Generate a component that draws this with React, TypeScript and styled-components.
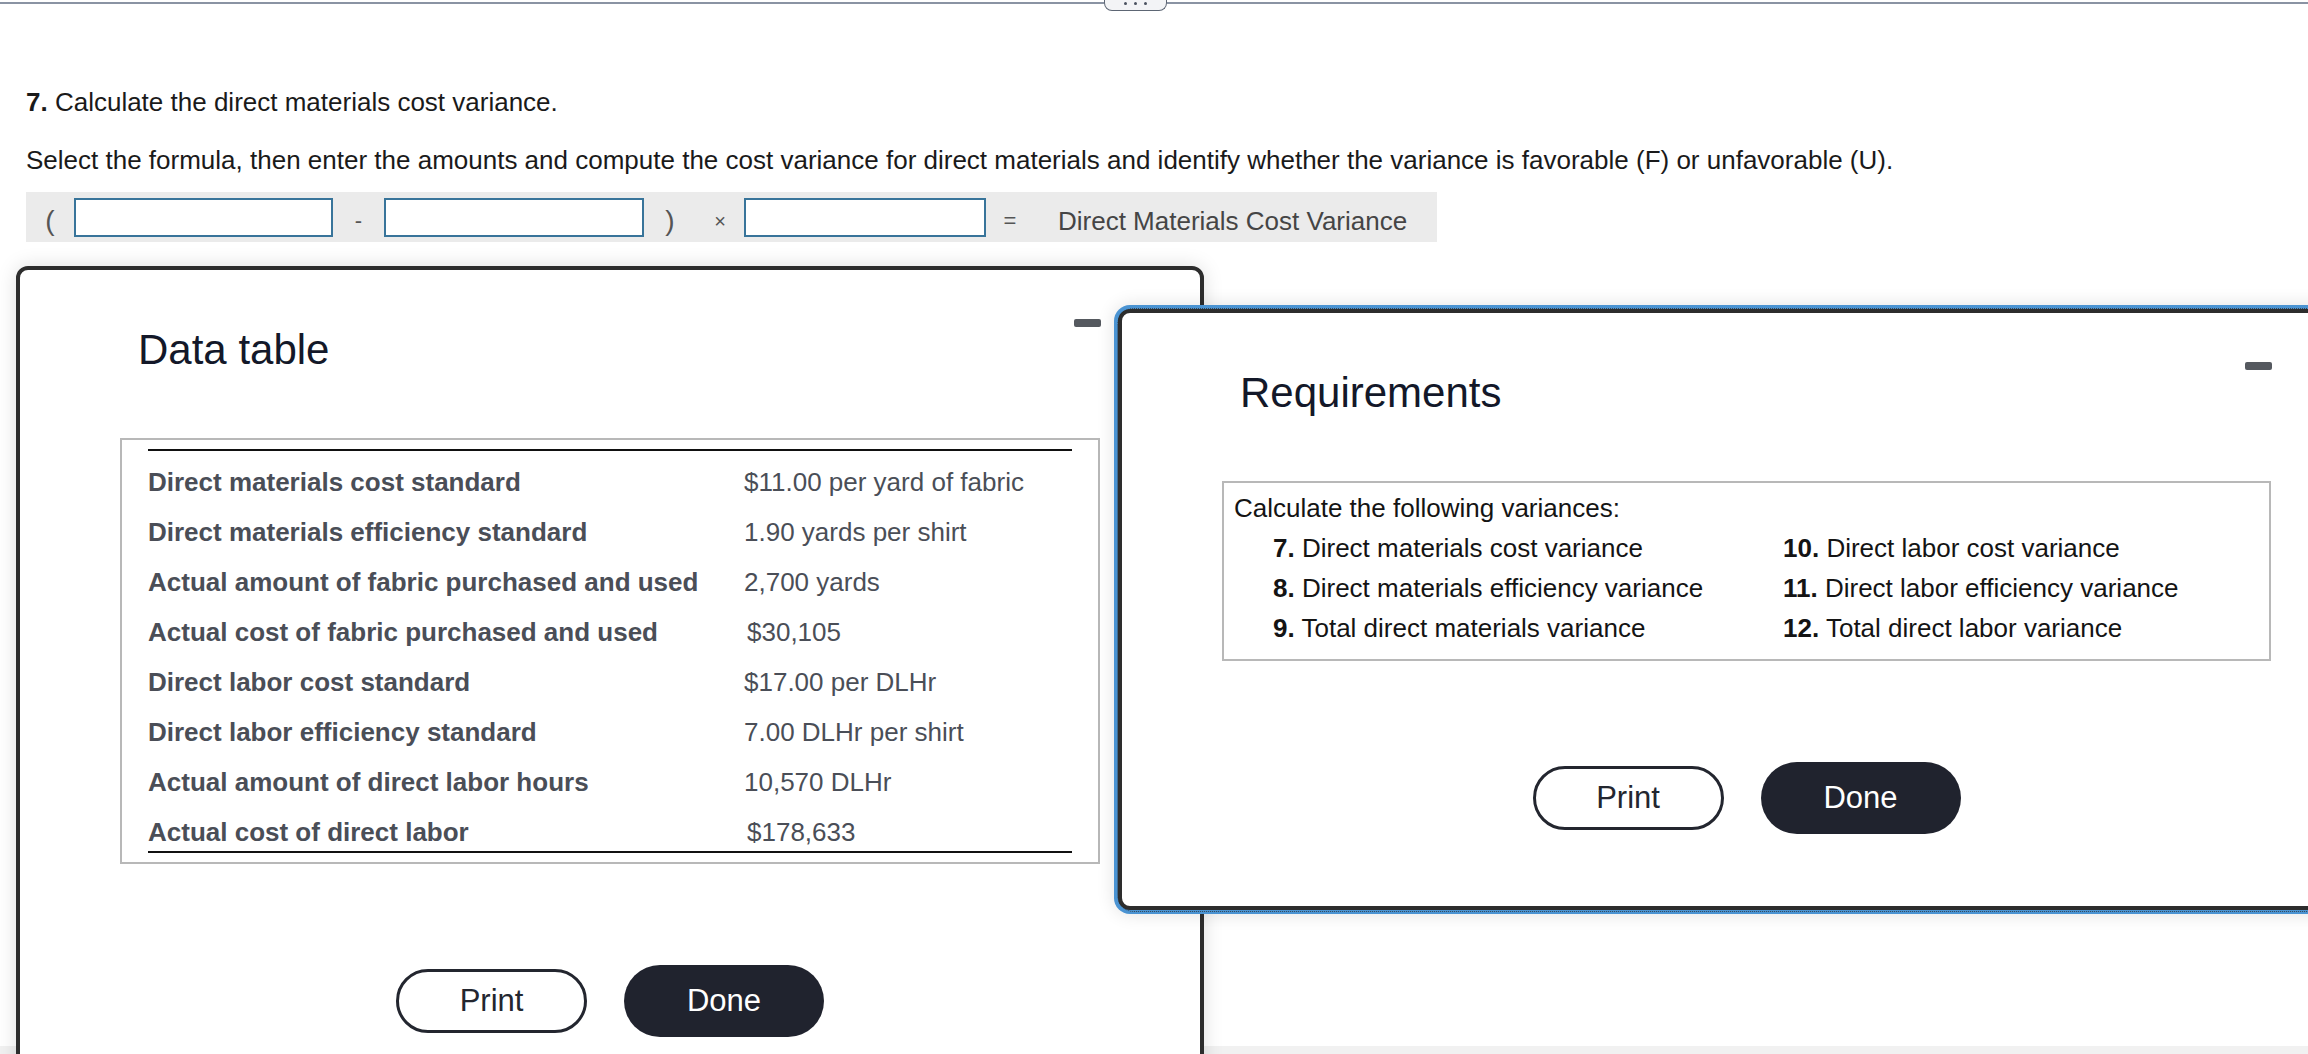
import { FC } from "react";
import styled, { createGlobalStyle } from "styled-components";

const dataRows = [
  { label: "Direct materials cost standard", value: "$11.00 per yard of fabric" },
  { label: "Direct materials efficiency standard", value: "1.90 yards per shirt" },
  { label: "Actual amount of fabric purchased and used", value: "2,700 yards" },
  { label: "Actual cost of fabric purchased and used", value: "$30,105", indent: true },
  { label: "Direct labor cost standard", value: "$17.00 per DLHr" },
  { label: "Direct labor efficiency standard", value: "7.00 DLHr per shirt" },
  { label: "Actual amount of direct labor hours", value: "10,570 DLHr" },
  { label: "Actual cost of direct labor", value: "$178,633", indent: true },
];

const requirements = [
  { num: "7.", text: "Direct materials cost variance" },
  { num: "10.", text: "Direct labor cost variance" },
  { num: "8.", text: "Direct materials efficiency variance" },
  { num: "11.", text: "Direct labor efficiency variance" },
  { num: "9.", text: "Total direct materials variance" },
  { num: "12.", text: "Total direct labor variance" },
];

const DialogButtons: FC = () => (
  <ButtonRow>
    <PrintButton type="button">Print</PrintButton>
    <DoneButton type="button">Done</DoneButton>
  </ButtonRow>
);

const App: FC = () => {
  return (
    <Page>
      <GlobalStyle />
      <TopBar>
        <RuleLine $basis="1104px" />
        <HandlePill>
          <Dot />
          <Dot />
          <Dot />
        </HandlePill>
        <RuleLine $basis="0" />
      </TopBar>

      <Content>
        <Question>
          <b>7.</b> Calculate the direct materials cost variance.
        </Question>
        <Instruction>
          Select the formula, then enter the amounts and compute the cost
          variance for direct materials and identify whether the variance is
          favorable (F) or unfavorable (U).
        </Instruction>
        <FormulaBar>
          <Symbol $width={48} $size={28}>(</Symbol>
          <AmountInput $width={259} />
          <Symbol $width={51} $size={22}>-</Symbol>
          <AmountInput $width={260} />
          <Symbol $width={52} $size={28}>)</Symbol>
          <Symbol $width={48} $size={20}>×</Symbol>
          <AmountInput $width={242} />
          <Symbol $width={48} $size={22}>=</Symbol>
          <FormulaLabel>Direct Materials Cost Variance</FormulaLabel>
        </FormulaBar>
      </Content>

      <Footer />

      <DialogWindow $left={16} $top={266} $width={1188}>
        <MinimizeButton />
        <DialogTitle>Data table</DialogTitle>
        <DataBox>
          <TableRule />
          <DataRows>
            {dataRows.map((row) => (
              <DataRow key={row.label}>
                <RowLabel>{row.label}</RowLabel>
                <RowValue $indent={!!row.indent}>{row.value}</RowValue>
              </DataRow>
            ))}
          </DataRows>
          <TableRule />
        </DataBox>
        <DialogButtons />
      </DialogWindow>

      <DialogWindow $left={1118} $top={309} $width={1257} $focused>
        <MinimizeButton />
        <DialogTitle>Requirements</DialogTitle>
        <ReqBox>
          <ReqHeading>Calculate the following variances:</ReqHeading>
          <ReqGrid>
            {requirements.map((req) => (
              <ReqItem key={req.num}>
                <b>{req.num}</b> {req.text}
              </ReqItem>
            ))}
          </ReqGrid>
        </ReqBox>
        <DialogButtons />
      </DialogWindow>
    </Page>
  );
};

export default App;

const GlobalStyle = createGlobalStyle`
  html, body {
    margin: 0;
    padding: 0;
    background: #ffffff;
    overflow: hidden;
  }
  body {
    font-family: "Liberation Sans", Arial, Helvetica, sans-serif;
    color: #1a1a1a;
  }
  * {
    box-sizing: border-box;
  }
`;

const Page = styled.div`
  position: relative;
  min-height: 100vh;
  display: flex;
  flex-direction: column;
  overflow: hidden;
`;

const TopBar = styled.div`
  display: flex;
  align-items: flex-start;
  height: 12px;
`;

const RuleLine = styled.div<{ $basis: string }>`
  flex: ${({ $basis }) => ($basis === "0" ? "1 1 0" : `0 0 ${$basis}`)};
  height: 2px;
  margin-top: 2px;
  background: #8a93a3;
`;

const HandlePill = styled.div`
  width: 63px;
  height: 11px;
  display: flex;
  justify-content: center;
  align-items: flex-start;
  gap: 7px;
  padding-top: 2px;
  background: #f3f4f6;
  border: 1.5px solid #5d6674;
  border-top: none;
  border-radius: 0 0 8px 8px;
`;

const Dot = styled.span`
  width: 3px;
  height: 3px;
  border-radius: 50%;
  background: #4b5260;
`;

const Content = styled.div`
  padding: 0 26px;
  display: flex;
  flex-direction: column;
  align-items: flex-start;
`;

const Question = styled.div`
  margin-top: 75px;
  font-size: 26px;
  line-height: 30px;
  color: #1a1a1a;
`;

const Instruction = styled.div`
  margin-top: 28px;
  font-size: 26px;
  line-height: 30px;
  color: #1a1a1a;
  white-space: nowrap;
`;

const FormulaBar = styled.div`
  margin-top: 17px;
  height: 50px;
  display: flex;
  align-items: center;
  padding-right: 30px;
  background: #ebebeb;
`;

const Symbol = styled.span<{ $width: number; $size: number }>`
  width: ${({ $width }) => $width}px;
  padding-top: 8px;
  text-align: center;
  font-size: ${({ $size }) => $size}px;
  color: #555555;
`;

const AmountInput = styled.input<{ $width: number }>`
  width: ${({ $width }) => $width}px;
  height: 39px;
  margin: 0;
  padding: 0 8px;
  background: #ffffff;
  border: 2px solid #38749a;
  border-radius: 0;
  font-size: 24px;
  font-family: inherit;
`;

const FormulaLabel = styled.span`
  margin-left: 24px;
  padding-top: 8px;
  font-size: 26px;
  color: #454545;
`;

const Footer = styled.div`
  margin-top: auto;
  height: 8px;
  background: #f1f1f1;
`;

const DialogWindow = styled.div<{
  $left: number;
  $top: number;
  $width: number;
  $focused?: boolean;
}>`
  position: absolute;
  left: ${({ $left }) => $left}px;
  top: ${({ $top }) => $top}px;
  width: ${({ $width }) => $width}px;
  padding: 59px 100px 72px;
  display: flex;
  flex-direction: column;
  background: #ffffff;
  border: 4px solid #2d2d2d;
  border-radius: 12px;
  box-shadow: ${({ $focused }) =>
    $focused
      ? "0 0 0 4px #4a93d2, 0 0 18px 4px rgba(0, 0, 0, 0.12)"
      : "0 0 20px rgba(0, 0, 0, 0.13)"};

  ${({ $focused }) =>
    $focused
      ? `
  &::after {
    content: "";
    position: absolute;
    inset: -5.5px;
    border: 1.5px dotted rgba(45, 45, 45, 0.75);
    border-radius: 17px;
    pointer-events: none;
  }`
      : ""}
`;

const MinimizeButton = styled.span`
  position: absolute;
  top: 49px;
  right: 99px;
  width: 27px;
  height: 8px;
  border-radius: 2px;
  background: #55595f;
`;

const DialogTitle = styled.h2`
  margin: 0;
  padding-left: 18px;
  font-size: 42px;
  line-height: 42px;
  font-weight: 400;
  color: #131829;
`;

const DataBox = styled.div`
  margin-top: 67px;
  padding: 9px 26px;
  border: 2px solid #b8b8b8;
`;

const TableRule = styled.div`
  height: 2px;
  background: #111111;
`;

const DataRows = styled.div`
  margin-top: 6px;
`;

const DataRow = styled.div`
  display: grid;
  grid-template-columns: 596px 1fr;
  padding: 12px 0;
  font-size: 26px;
  line-height: 26px;
  color: #4a4e57;

  &:last-child {
    padding-bottom: 6px;
  }
`;

const RowLabel = styled.span`
  font-weight: 700;
  white-space: nowrap;
`;

const RowValue = styled.span<{ $indent: boolean }>`
  padding-left: ${({ $indent }) => ($indent ? "3px" : "0")};
  white-space: nowrap;
`;

const ReqBox = styled.div`
  margin-top: 67px;
  padding: 5px 10px 11px;
  border: 2px solid #b8b8b8;
  font-size: 26px;
  color: #141414;
`;

const ReqHeading = styled.div`
  line-height: 40px;
`;

const ReqGrid = styled.div`
  display: grid;
  grid-template-columns: 510px 1fr;
  padding-left: 39px;
`;

const ReqItem = styled.div`
  line-height: 40px;
  white-space: nowrap;
`;

const ButtonRow = styled.div`
  margin-top: 101px;
  display: flex;
  justify-content: center;
  align-items: center;
  gap: 37px;
`;

const PrintButton = styled.button`
  width: 191px;
  height: 64px;
  padding: 0;
  border: 3px solid #23262f;
  border-radius: 32px;
  background: #ffffff;
  color: #23262f;
  font-family: inherit;
  font-size: 31px;
`;

const DoneButton = styled.button`
  width: 200px;
  height: 72px;
  padding: 0;
  border: none;
  border-radius: 36px;
  background: #20232e;
  color: #ffffff;
  font-family: inherit;
  font-size: 31px;
`;
